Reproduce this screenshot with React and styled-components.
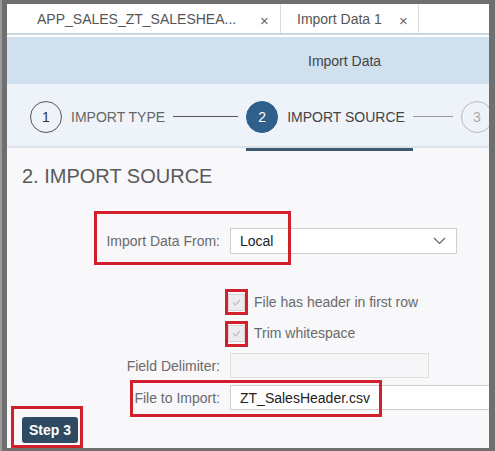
import React from "react";
import styled, { createGlobalStyle } from "styled-components";

const GlobalStyle = createGlobalStyle`
  html, body {
    margin: 0;
    padding: 0;
    background: #6f6f6f;
  }
  body {
    font-family: "Liberation Sans", Arial, sans-serif;
  }
`;

const Frame = styled.div`
  width: 495px;
  height: 451px;
  box-sizing: border-box;
  padding: 4px 6px 3px 5px;
  background: #6f6f6f;
  border-left: 2px solid #9a9a9a;
`;

const Window = styled.div`
  position: relative;
  width: 482px;
  height: 444px;
  overflow: hidden;
  background: #f8f7fa;
  display: flex;
  flex-direction: column;
`;

const TabBar = styled.div`
  display: flex;
  height: 29px;
  background: #fff;
  flex-shrink: 0;
`;

const Tab = styled.div`
  display: flex;
  align-items: center;
  box-sizing: border-box;
  width: ${(p) => p.$width}px;
  padding-left: ${(p) => p.$pad}px;
  font-size: 14px;
  color: #555;
  white-space: nowrap;
  border-left: 1px solid ${(p) => (p.$active ? "#dcdcdc" : "transparent")};
  border-right: 1px solid ${(p) => (p.$active ? "#dcdcdc" : "transparent")};
`;

const TabLabel = styled.span`
  flex: 1;
`;

const Close = styled.span`
  width: ${(p) => p.$w}px;
  font-size: 15px;
  color: #666;
  padding-top: 3px;
`;

const Header = styled.div`
  height: 47px;
  border-top: 2px solid #c9d6e2;
  box-shadow: inset 0 2px 0 #fff;
  padding-top: 2px;
  background: #d0e0ee;
  display: flex;
  align-items: center;
  padding-left: 301px;
  font-size: 14px;
  color: #444;
  flex-shrink: 0;
`;

const Stepper = styled.div`
  display: flex;
  align-items: stretch;
  height: 59px;
  padding: 3px 0 0 23px;
  background: #eef3f9;
  border-bottom: 2px solid #dbe2e9;
  flex-shrink: 0;
`;

const Step = styled.div`
  position: relative;
  display: flex;
  align-items: center;
  gap: 9px;
  padding-right: 8px;

  &::after {
    content: "";
    display: ${(p) => (p.$active ? "block" : "none")};
    position: absolute;
    left: 0;
    right: 0;
    bottom: -5px;
    height: 3px;
    background: #3d5a72;
  }
`;

const Circle = styled.div`
  width: 32px;
  height: 32px;
  box-sizing: border-box;
  border-radius: 50%;
  display: flex;
  align-items: center;
  justify-content: center;
  flex-shrink: 0;
  font-size: 14px;
  border: 1px solid ${(p) => (p.$state === "active" ? "#2f5f8a" : p.$state === "done" ? "#555" : "#bbb")};
  background: ${(p) => (p.$state === "active" ? "#2f5f8a" : "transparent")};
  color: ${(p) => (p.$state === "active" ? "#fff" : p.$state === "done" ? "#333" : "#aaa")};
`;

const StepLabel = styled.span`
  font-size: 14px;
  white-space: nowrap;
  color: ${(p) => (p.$active ? "#444" : "#666")};
`;

const Connector = styled.div`
  align-self: center;
  width: ${(p) => p.$width}px;
  height: 1px;
  margin-right: 8px;
  flex-shrink: 0;
  background: ${(p) => p.$color};
`;

const Content = styled.div`
  padding: 17px 0 0 15px;
`;

const Heading = styled.h2`
  margin: 0;
  font-size: 20px;
  line-height: 23px;
  font-weight: normal;
  color: #5a5a5a;
`;

const Form = styled.div`
  display: flex;
  flex-direction: column;
  margin-left: -15px;
`;

const Row = styled.div`
  display: grid;
  grid-template-columns: 213px auto;
  column-gap: 10px;
  align-items: center;
  height: ${(p) => p.$h}px;
  margin-top: ${(p) => p.$mt}px;
`;

const Label = styled.label`
  text-align: right;
  font-size: 14px;
  color: #6a6a6a;
  white-space: nowrap;
`;

const SelectBox = styled.div`
  width: 227px;
  height: 26px;
  box-sizing: border-box;
  display: flex;
  align-items: center;
  justify-content: space-between;
  padding: 0 10px 0 9px;
  background: #fff;
  border: 1px solid #cfcfcf;
  font-size: 14px;
  color: #222;
`;

const Input = styled.div`
  width: ${(p) => p.$width}px;
  height: 25px;
  box-sizing: border-box;
  display: flex;
  align-items: center;
  padding-left: 9px;
  background: ${(p) => (p.$disabled ? "#f6f6f8" : "#fff")};
  border: 1px solid ${(p) => (p.$disabled ? "#dedede" : "#cfcfcf")};
  font-size: 14px;
  color: #222;
`;

const CheckLine = styled.div`
  display: flex;
  align-items: center;
  gap: 9px;
  margin-left: -2px;
  font-size: 14px;
  color: #6a6a6a;
`;

const CheckBox = styled.span`
  width: 17px;
  height: 17px;
  box-sizing: border-box;
  display: flex;
  align-items: center;
  justify-content: center;
  background: #ececec;
  border: 1px solid #d4d4d4;
`;

const Actions = styled.div`
  display: flex;
  margin-top: 7px;
`;

const Button = styled.button`
  height: 26px;
  padding: 0 7px;
  border: none;
  border-radius: 3px;
  background: #2e4b63;
  color: #fff;
  font-family: inherit;
  font-size: 14px;
  font-weight: bold;
`;

const Highlight = styled.div`
  position: absolute;
  left: ${(p) => p.$x}px;
  top: ${(p) => p.$y}px;
  width: ${(p) => p.$w}px;
  height: ${(p) => p.$h}px;
  box-sizing: border-box;
  border: 3px solid #d21f2c;
  pointer-events: none;
`;

const Chevron = () => (
  <svg width="13" height="8" viewBox="0 0 13 8">
    <polyline points="1,1 6.5,6.5 12,1" fill="none" stroke="#666" strokeWidth="1.2" />
  </svg>
);

const Tick = () => (
  <svg width="11" height="9" viewBox="0 0 11 9">
    <polyline points="2,4.5 4.5,7 9,2" fill="none" stroke="#bdbdbd" strokeWidth="1.2" />
  </svg>
);

const App = () => {
  return (
    <Frame>
      <GlobalStyle />
      <Window>
        <TabBar>
          <Tab $width={273} $pad={29}>
            <TabLabel>APP_SALES_ZT_SALESHEA...</TabLabel>
            <Close $w={19}>×</Close>
          </Tab>
          <Tab $width={139} $pad={16} $active>
            <TabLabel>Import Data 1</TabLabel>
            <Close $w={19}>×</Close>
          </Tab>
        </TabBar>
        <Header>Import Data</Header>
        <Stepper>
          <Step>
            <Circle $state="done">1</Circle>
            <StepLabel>IMPORT TYPE</StepLabel>
          </Step>
          <Connector $width={65} $color="#555" />
          <Step $active>
            <Circle $state="active">2</Circle>
            <StepLabel $active>IMPORT SOURCE</StepLabel>
          </Step>
          <Connector $width={40} $color="#999" />
          <Step>
            <Circle $state="todo">3</Circle>
          </Step>
        </Stepper>
        <Content>
          <Heading>2. IMPORT SOURCE</Heading>
          <Form>
            <Row $h={26} $mt={40}>
              <Label>Import Data From:</Label>
              <SelectBox>
                <span>Local</span>
                <Chevron />
              </SelectBox>
            </Row>
            <Row $h={22} $mt={37}>
              <span />
              <CheckLine>
                <CheckBox><Tick /></CheckBox>
                File has header in first row
              </CheckLine>
            </Row>
            <Row $h={22} $mt={9}>
              <span />
              <CheckLine>
                <CheckBox><Tick /></CheckBox>
                Trim whitespace
              </CheckLine>
            </Row>
            <Row $h={25} $mt={9}>
              <Label>Field Delimiter:</Label>
              <Input $width={199} $disabled />
            </Row>
            <Row $h={25} $mt={7}>
              <Label>File to Import:</Label>
              <Input $width={270}>ZT_SalesHeader.csv</Input>
            </Row>
          </Form>
          <Actions>
            <Button>Step 3</Button>
          </Actions>
        </Content>
        <Highlight $x={87} $y={207} $w={197} $h={54} />
        <Highlight $x={218} $y={285} $w={23} $h={26} />
        <Highlight $x={218} $y={317} $w={23} $h={26} />
        <Highlight $x={123} $y={376} $w={252} $h={37} />
        <Highlight $x={4} $y={402} $w={72} $h={42} />
      </Window>
    </Frame>
  );
};

export default App;
